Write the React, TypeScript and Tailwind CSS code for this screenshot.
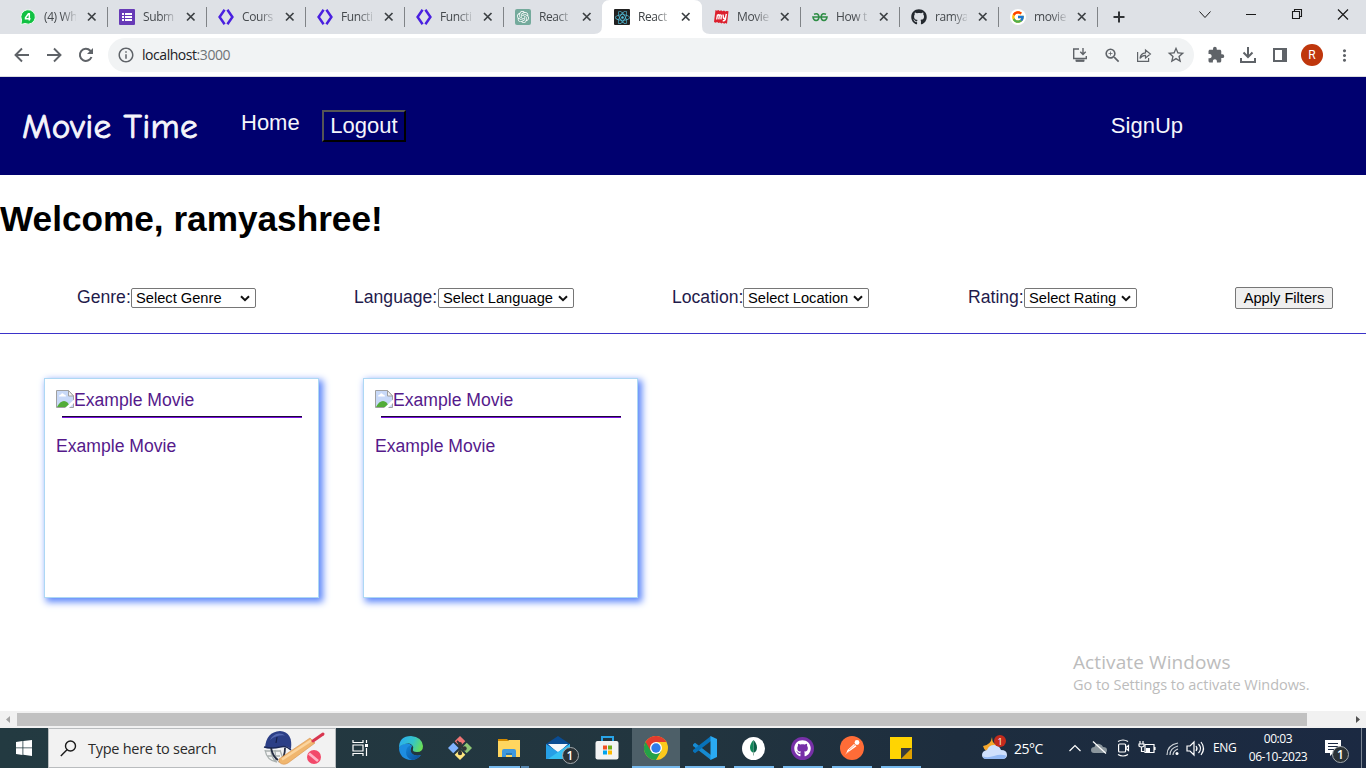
import React, { type ReactNode } from 'react';
import { MdInfoOutline, MdZoomIn, MdStarBorder, MdExtension, MdMoreVert } from 'react-icons/md';
import { FaReact, FaGithub } from 'react-icons/fa';
import { FcGoogle } from 'react-icons/fc';
import { SiOpenai } from 'react-icons/si';

/* ---------- Favicons ---------- */

const WhatsApp = () => (
  <svg width="16" height="16" viewBox="0 0 16 16">
    <path d="M1 15.5 1.6 11A7.2 7.2 0 1 1 5 14.4Z" fill="#12c143" stroke="#f4fff6" strokeWidth=".9" />
    <path d="M9.3 11.500V4.800H8.400L5.500 8.800v1h5" fill="none" stroke="#fff" strokeWidth="1.500" />
  </svg>
);

const Forms = () => (
  <svg width="16" height="16" viewBox="0 0 16 16">
    <rect width="16" height="16" rx="1" fill="#673ab7" />
    <path d="M3 4h2v2H3zm3 0h7v2H6zM3 7h2v2H3zm3 0h7v2H6zM3 10h2v2H3zm3 0h7v2H6z" fill="#fff" />
  </svg>
);

const Brackets = () => (
  <svg width="16" height="16" viewBox="0 0 16 16" fill="none" stroke="#4a20e0" strokeWidth="2.5">
    <path d="M6.6.8 1.6 8l5 7.2M9.4.8l5 7.2-5 7.2" />
  </svg>
);

const OpenAI = () => (
  <span className="flex h-4 w-4 items-center justify-center rounded-[2px] bg-[#74aa9c] text-white">
    <SiOpenai size={12} />
  </span>
);

const ReactIcon = () => (
  <span className="flex h-4 w-4 items-center justify-center rounded-[1px] bg-[#222] text-[#53c1de]">
    <FaReact size={15} />
  </span>
);

const BookMyShow = () => (
  <svg className="shrink-0" width="17" height="16" viewBox="0 0 17 16">
    <path d="m2.5 1 1.4.8L5.3.9l1.4 1 1.4-.7 1.4 1 1.5-.7 1.3 1 1.4-.6 1.8.4L14 14.7l-1.5-.7-1.4.8-1.4-1-1.4.6-1.3-1-1.5.7-1.4-1-1.5.6-1.6-.6Z" fill="#dc1f2d" />
    <path d="M3.7 10.5 4.5 5.5M4.3 6.5q1.8-1.5 2 0l-.5 3.8M6.3 6.5q1.9-1.3 2 .2l-.4 3.6M10 5.5l.5 3.7q1 .8 2-.3L13.3 5l-1 5.6q-.7 1.7-2.6 1" fill="none" stroke="#fff" strokeWidth="1.4" />
  </svg>
);

const Google = () => (
  <span className="flex h-4 w-4 shrink-0 items-center justify-center rounded-full bg-white"><FcGoogle size={14} /></span>
);

const Geeks = () => (
  <svg width="16" height="16" viewBox="0 0 16 16" fill="none" stroke="#2f8d46" strokeWidth="1.600">
    <path d="M2 5.300Q6.300 3.500 7 8q-.4 3.700-3 3.500-2.600-.1-3-3.500h14q-.4 3.400-3 3.500-2.600.2-3-3.500.7-4.500 5-2.700" />
  </svg>
);

/* ---------- Browser ---------- */

const tabs: { title: string; icon: ReactNode }[] = [
  { title: '(4) Wh', icon: <WhatsApp /> },
  { title: 'Subm', icon: <Forms /> },
  { title: 'Cours', icon: <Brackets /> },
  { title: 'Functi', icon: <Brackets /> },
  { title: 'Functi', icon: <Brackets /> },
  { title: 'React', icon: <OpenAI /> },
  { title: 'React', icon: <ReactIcon /> },
  { title: 'Movie', icon: <BookMyShow /> },
  { title: 'How t', icon: <Geeks /> },
  { title: 'ramya', icon: <FaGithub size={16} color="#24292f" /> },
  { title: 'movie', icon: <Google /> },
];
const ACTIVE = 6;

function Tab({ title, icon, index }: { title: string; icon: ReactNode; index: number }) {
  const active = index === ACTIVE;
  const separated = !active && index !== ACTIVE - 1;
  return (
    <div className={`relative flex h-[34px] w-[99px] shrink-0 items-center pl-[11px] ${active ? 'text-[#3c4043]' : 'text-[#45494d]'}`}>
      {active && (
        <svg className="absolute -left-[9px] top-0" width="116" height="34" viewBox="0 0 116 34">
          <path d="M0 34q8 0 8-8V8q0-8 8-8h84q8 0 8 8v18q0 8 8 8Z" fill="#fff" />
        </svg>
      )}
      <span className="relative flex w-4 shrink-0 justify-center">{icon}</span>
      <span className="relative ml-[8px] w-[32px] shrink-0 whitespace-nowrap text-[12px] leading-4 tracking-[-0.4px] [mask-image:linear-gradient(to_right,#000_55%,rgba(0,0,0,0.15))]">{title}</span>
      <svg className="relative ml-[10px] shrink-0" width="12" height="12" viewBox="0 0 12 12" stroke="#3c4043" strokeWidth="1.700"><path d="m2 2 7.500 7.500M9.500 2 2 9.500" /></svg>
      {separated && <span className="ml-auto h-5 w-px bg-[#808387]" />}
    </div>
  );
}

function WindowStrip() {
  return (
    <div className="flex h-[34px] items-center bg-[#dee1e6] pl-[9px]">
      {tabs.map((t, i) => <Tab key={i} index={i} {...t} />)}
      <svg className="ml-[15px]" width="12" height="12" viewBox="0 0 12 12" stroke="#303336" strokeWidth="2"><path d="M6 .5v11M.5 6h11" /></svg>
      <svg className="ml-auto" width="176" height="34" viewBox="1190 0 176 34" fill="none" stroke="#1a1a1a">
        <path d="m1199.500 11.500 5.500 6 5.500-6" />
        <path d="M1246 14.5h10M1292.5 11.5h7v7h-7zM1294.5 11.500v-2h7v7h-2" strokeWidth="1.1" />
        <path d="m1338 9.500 10 10m0-10-10 10" strokeWidth="1.200" />
      </svg>
    </div>
  );
}

const InstallIcon = () => (
  <svg width="16" height="16" viewBox="0 0 16 16" fill="none" stroke="#5f6368" strokeWidth="1.4">
    <path d="M7 2H1.700v9.500h12.600V9M4 14h8M11 1v6M8.300 4.800 11 7.500l2.700-2.700" /><path d="M3.500 12.500h9v2h-9z" fill="#5f6368" stroke="none" />
  </svg>
);
const ShareIcon = () => (
  <svg width="16" height="16" viewBox="0 0 16 16" fill="none" stroke="#5f6368" strokeWidth="1.200">
    <path d="M1.600 5v9.400h11V11M4 11.500Q4.500 6 9.500 5.800V3L14.400 7 9.500 11V8.300Q6 8.300 4 11.500Z" />
  </svg>
);

function Toolbar() {
  return (
    <div className="flex h-[43px] items-center border-b border-[#dadce0] bg-white text-[#5f6368]">
      <svg className="ml-[14px]" width="16" height="16" viewBox="0 0 16 16" fill="none" stroke="#5f6368" strokeWidth="1.900"><path d="M15 8H2M8 1.500 1.500 8 8 14.500" /></svg>
      <svg className="ml-[16px]" width="16" height="16" viewBox="0 0 16 16" fill="none" stroke="#5f6368" strokeWidth="1.900"><path d="M1 8h13M8 1.500 14.500 8 8 14.500" /></svg>
      <svg className="ml-[16px]" width="16" height="16" viewBox="0 0 16 16" fill="none" stroke="#5f6368" strokeWidth="2"><path d="M13.500 10A6 6 0 1 1 12.300 3.800L13.500 5" /><path d="M15 1v6H9Z" fill="#5f6368" stroke="none" /></svg>
      <div className="ml-[14px] flex h-[34px] w-[1086px] items-center rounded-full bg-[#f1f3f4]">
        <MdInfoOutline className="ml-[9px]" size={18} />
        <span className="ml-[7px] text-[14px] leading-[18px] tracking-[-0.45px] text-[#202124]">localhost<span className="text-[#6f7377]">:3000</span></span>
        <div className="ml-auto flex items-center pr-[8px]">
          <InstallIcon />
          <MdZoomIn className="ml-[15px]" size={19} />
          <span className="ml-[14px]"><ShareIcon /></span>
          <MdStarBorder className="ml-[14px]" size={20} />
        </div>
      </div>
      <MdExtension className="ml-[13px]" size={18} />
      <svg className="ml-[14px]" width="18" height="18" viewBox="0 0 18 18" fill="none" stroke="#5f6368" strokeWidth="2">
        <path d="M9 1v9M4.500 6.500 9 11l4.500-4.500M2 12v4h14v-4" />
      </svg>
      <svg className="ml-[16px]" width="14" height="14" viewBox="0 0 14 14">
        <path d="M1 1h12v12H1z" fill="none" stroke="#5f6368" strokeWidth="2" /><path d="M9 0h5v14H9z" fill="#5f6368" />
      </svg>
      <span className="ml-[14px] flex h-[22px] w-[22px] items-center justify-center rounded-full bg-[#bf360c] font-[Roboto] text-[12px] text-white">R</span>
      <MdMoreVert className="ml-[12px]" size={19} />
    </div>
  );
}

/* ---------- Page ---------- */

function Header() {
  return (
    <header className="flex h-[98px] items-start bg-[#00006f] text-[22px] leading-[25px] text-[#f5f5fb]">
      <span className="ml-[22px] mt-[27px] w-[219px] whitespace-nowrap font-['Comic_Sans_MS','Comic_Neue',Lato,sans-serif] text-[35.200px] leading-[46px] tracking-[0.3px] [-webkit-text-stroke:0.9px_#f5f5fb]">Movie Time</span>
      <span className="mt-[33px] w-[81px]">Home</span>
      <button className="mt-[33px] flex h-[32px] w-[84px] items-center justify-center border-2 border-b-black border-l-[#555] border-r-black border-t-[#555] pb-[2px]">Logout</button>
      <span className="ml-auto mr-[183px] mt-[36px]">SignUp</span>
    </header>
  );
}

const filters = [
  { label: 'Genre', box: 'w-[125px]', cell: 'w-[277px]', field: 'w-[54px]' },
  { label: 'Language', box: 'w-[136px]', cell: 'w-[318px]', field: 'w-[84px]' },
  { label: 'Location', box: 'w-[126px]', cell: 'w-[296px]', field: 'w-[71px]' },
  { label: 'Rating', box: 'w-[113px]', cell: 'w-[267px]', field: 'w-[56px]' },
];

function Filters() {
  return (
    <div className="flex h-[75px] items-start border-b border-[#3b33c9] pl-[77px] pt-[28px]">
      {filters.map((f) => (
        <div key={f.label} className={`flex shrink-0 items-start ${f.cell}`}>
          <label className={`shrink-0 whitespace-nowrap text-[17.600px] leading-[20px] text-[#1f1b4b] ${f.field}`}>{f.label}:</label>
          <button className={`mt-[1px] flex h-[20px] items-center rounded-[2px] border border-[#767676] bg-white pl-[4px] text-[14.667px] leading-[18px] text-black ${f.box}`}>
            <span className="whitespace-nowrap">Select {f.label}</span>
            <svg className="ml-auto mr-[5px] shrink-0" width="10" height="7" viewBox="0 0 10 7" fill="none" stroke="#111" strokeWidth="2"><path d="m1 1.200 4 4 4-4" /></svg>
          </button>
        </div>
      ))}
      <button className="flex h-[22px] w-[98px] items-center justify-center whitespace-nowrap rounded-[2px] border border-[#767676] bg-[#efefef] text-[14.667px] text-black">Apply Filters</button>
    </div>
  );
}

const BrokenImage = () => (
  <svg width="18" height="18" viewBox="0 0 18 18">
    <path d="M.5.500h12L17.500 6v11.500H.5Z" fill="#c8d9f8" stroke="#a0a0a0" />
    <path d="M3 6.500q0-2 2-2 1-2.500 3 0 2 0 2 2Z" fill="#fff" />
    <path d="M1 17q3-6 7-6 4 0 6 6Z" fill="#52ac38" />
    <path d="M12.500.5V6h5Z" fill="#f4f4f4" stroke="#a0a0a0" />
    <path d="m18.500 9-10 9.500h4l6-6Z" fill="#fff" />
  </svg>
);

function MovieCard() {
  return (
    <article className="h-[220px] w-[275px] border border-[#add8f4] bg-white px-[11px] pt-[11px] text-[17.600px] leading-[20px] text-[#551a8b] shadow-[3px_3px_7px_1px_#5c86fa]">
      <div className="flex h-[20px]"><BrokenImage /><span>Example Movie</span></div>
      <div className="ml-[6px] mt-[6px] h-[2px] w-[240px] border-b border-t border-b-[#7a0fe0] border-t-[#1c0838]" />
      <p className="mt-[18px]">Example Movie</p>
    </article>
  );
}

function Page() {
  return (
    <main className="relative flex h-[634px] flex-col overflow-hidden bg-white font-['Liberation_Sans',Arial,sans-serif]">
      <Header />
      <h1 className="h-[84px] whitespace-nowrap pt-[24px] text-[35.200px] font-bold leading-[40px] text-black">Welcome, ramyashree!</h1>
      <Filters />
      <section className="flex gap-[44px] pl-[44px] pt-[44px]">
        <MovieCard />
        <MovieCard />
      </section>
      <aside className="absolute left-[1073px] top-[573px] whitespace-nowrap font-['Segoe_UI','Open_Sans',sans-serif] text-[#bcbcbc]">
        <p className="text-[19px] leading-[24px] tracking-[0.1px]">Activate Windows</p>
        <p className="text-[14.500px] leading-[22px] tracking-[-0.03px]">Go to Settings to activate Windows.</p>
      </aside>
    </main>
  );
}

function Scrollbar() {
  return (
    <div className="flex h-[17px] items-center bg-[#f1f1f1]">
      <svg width="17" height="17" viewBox="0 0 17 17"><path d="M10 5v7L6 8.500Z" fill="#a3a3a3" /></svg>
      <div className="h-[13px] w-[1290px] bg-[#c1c1c1]" />
      <svg className="ml-auto" width="17" height="17" viewBox="0 0 17 17"><path d="M7 5v7l4-3.500Z" fill="#505050" /></svg>
    </div>
  );
}

/* ---------- Taskbar ---------- */

const Cricket = () => (
  <svg width="62" height="36" viewBox="0 0 62 36">
    <g fill="none" stroke="#a9b0af" strokeWidth="1.300"><path d="M2 20q2 11 12 12M2 21h15M4 26h13M8 20q0 7 5 12M12 20l1 12M17 20l3 9-5 3" /></g>
    <path d="M2 18Q3 2 17 1q13 1 11 18-4-4-11-2-8 2-15 1Z" fill="#2b3e86" />
    <path d="M7 10Q10 4 16 3.500q4 0 6 2-8-1-15 4.500Z" fill="#5468b0" />
    <path d="m14 7-1 6" stroke="#16214d" strokeWidth="1.200" />
    <path d="M1 17q8 2 16 0 6-2 11 3" fill="none" stroke="#1b2858" strokeWidth="1.500" />
    <path d="M8 18q2 9 7 12M22 18q0 9-5 14" fill="none" stroke="#252c42" strokeWidth="1.800" />
    <path d="m16 29 31-21 5 5-27 20q-5 3-9-1Z" fill="#f0b66e" stroke="#d8924c" strokeWidth=".6" />
    <path d="m19 29.500 29-19" stroke="#fbd49d" strokeWidth="2.500" />
    <path d="m50 11 10-7" stroke="#d8364f" strokeWidth="3" strokeLinecap="round" />
    <circle cx="51" cy="27" r="7" fill="#f2496a" /><path d="m46 23.500 9 7.500" stroke="#ffb3c6" strokeWidth="2.800" />
  </svg>
);

const TaskView = () => (
  <svg width="17" height="16" viewBox="0 0 17 16" fill="none" stroke="#fff" strokeWidth="1.200">
    <path d="M1 0v2.500h10V0M1 16v-2.500h10V16M1 5h10v6H1zM14.500 0v3M14.500 8v8" /><path d="M13 4h3v3h-3z" fill="#fff" stroke="none" />
  </svg>
);
const Edge = () => (
  <svg width="24" height="24" viewBox="0 0 24 24">
    <defs>
      <linearGradient id="edgeTop" x1="0" y1=".3" x2="1" y2=".6"><stop stopColor="#2aaef0" /><stop offset=".55" stopColor="#35c4c8" /><stop offset="1" stopColor="#6be053" /></linearGradient>
      <linearGradient id="edgeLow" x1="0" y1="0" x2="1" y2="1"><stop stopColor="#1285d8" /><stop offset="1" stopColor="#0d4c95" /></linearGradient>
    </defs>
    <path d="M0 12C0 19 5 24 12 24q6 0 10-5-5 2-9-1-3-3 0-8-3-4-8-2-4 1-5 4Z" fill="#1d8de0" />
    <path d="M7 16q0-6 6-7-3 3-1 7 3 5 10 3-4 5-9 5-6-2-6-8Z" fill="url(#edgeLow)" />
    <path d="M0 12Q0 0 12 0q11 1 12 10 0 6-6 6-5 0-4-3 1-2-1-4-3-3-7-1-5 1-6 4Z" fill="url(#edgeTop)" />
  </svg>
);
const Git = () => (
  <svg width="24" height="24" viewBox="0 0 24 24">
    <g transform="rotate(45 12 12)">
      <path d="M3.500 3.500H11V11H3.500z" fill="#f07575" /><path d="M13 3.500h7.500V11H13z" fill="#8fc775" /><path d="M3.500 13H11v7.500H3.500z" fill="#80b3ff" /><path d="M13 13h7.500v7.500H13z" fill="#ffe680" />
    </g>
    <path d="M9 5l3 3v9M12 9l4 4" fill="none" stroke="#303436" strokeWidth="1.800" />
    <g fill="#303436"><circle cx="12" cy="8" r="2" /><circle cx="16.500" cy="12.500" r="2.200" /><circle cx="12" cy="17" r="2.200" /></g>
  </svg>
);
const Explorer = () => (
  <svg width="22" height="20" viewBox="0 0 22 20">
    <path d="M0 1h9l2 2H0z" fill="#d58b00" /><path d="M0 3h10l1-1h11v17H0Z" fill="#ffd65f" /><path d="M4 19v-6q0-2 2-2h10q2 0 2 2v6h-4v-4H8v4Z" fill="#3e98dd" /><path d="M8 15h6v2H8z" fill="#2678b8" />
  </svg>
);
const Mail = () => (
  <span className="relative flex">
    <svg width="24" height="24" viewBox="0 0 24 24">
      <path d="M0 8 12 0l12 8v4H0Z" fill="#0a4c93" /><path d="M2 8h20l-10 9Z" fill="#f4f7fb" /><path d="M0 8 12 16l12-8v15H0Z" fill="#269fe6" /><path d="m24 8-22 15h22Z" fill="#35c0f2" />
    </svg>
    <CountBadge className="-bottom-[4px] left-[16px]" />
  </span>
);
function CountBadge({ className }: { className: string }) {
  return <span className={`absolute flex h-[17px] w-[17px] items-center justify-center rounded-full border border-[#a3a9ad] bg-[#2b3236] text-[12px] font-semibold leading-none text-white ${className}`}>1</span>;
}
const Store = () => (
  <svg width="24" height="24" viewBox="0 0 24 24">
    <path d="M7 6V1h11v5" fill="none" stroke="#29a5e8" strokeWidth="2" /><rect x=".5" y="5" width="23" height="18.500" rx="2" fill="#f3f3f3" />
    <path d="M8 9.500h4v4H8z" fill="#f25022" /><path d="M13 9.500h4v4h-4z" fill="#6fae1c" /><path d="M8 14.500h4v4H8z" fill="#00a4ef" /><path d="M13 14.500h4v4h-4z" fill="#ffb900" />
  </svg>
);
const Chrome = () => (
  <svg width="24" height="24" viewBox="0 0 24 24">
    <circle cx="12" cy="12" r="12" fill="#fcc91c" />
    <path d="M12 12 1.600 6A12 12 0 0 0 12 24l5.200-9Z" fill="#24a148" />
    <path d="M1.600 6a12 12 0 0 1 20.800 0H12v6l-5.200 3Z" fill="#e33b2e" />
    <circle cx="12" cy="12" r="6" fill="#fff" /><circle cx="12" cy="12" r="4.700" fill="#2f7cec" />
  </svg>
);
const VSCode = () => (
  <svg width="24" height="24" viewBox="0 0 24 24">
    <path d="M0 8.500 2 6.800 18 19v5L0 10Z" fill="#168bd2" /><path d="m0 15.500 2 1.700L18 5V0L0 14Z" fill="#0872b9" /><path d="m17.500 0 6.500 3v18l-6.500 3Z" fill="#2aaaf2" />
  </svg>
);
const Mongo = () => (
  <span className="flex h-[23px] w-[23px] items-center justify-center rounded-full bg-white">
    <svg width="9" height="16" viewBox="0 0 9 16"><path d="M4.500 0Q1 3.500 1 7.500T4.500 13Z" fill="#11885a" /><path d="M4.500 0Q8 3.500 8 7.500T4.500 13Z" fill="#0b5f46" /><path d="M4.500 12v3.500" stroke="#8fae9f" /></svg>
  </span>
);
const GitHubDesktop = () => (
  <span className="flex h-[23px] w-[23px] items-center justify-center rounded-full bg-[#7730a8] text-white"><FaGithub size={17} /></span>
);
const Postman = () => (
  <svg width="24" height="24" viewBox="0 0 24 24">
    <circle cx="12" cy="12" r="12" fill="#ff6c37" /><circle cx="17" cy="6.500" r="2.400" fill="#fff" />
    <path d="m6 18 1.500-4L14 8l2.500 2.200-7 5Z" fill="#fff" /><path d="m5 18.500 4-3M9 14l6-5" stroke="#ff9b78" strokeWidth=".8" />
  </svg>
);
const Sticky = () => (
  <svg width="22" height="22" viewBox="0 0 22 22"><path d="M0 0h22v22H0z" fill="#ffd402" /><path d="M22 11v11H11Z" fill="#dfa000" /><path d="M11 11h11L11 22Z" fill="#3a3b3c" /></svg>
);

const apps: { icon: ReactNode; state?: 'open' | 'group' | 'active' }[] = [
  { icon: <Edge /> }, { icon: <Git /> }, { icon: <Explorer />, state: 'group' }, { icon: <Mail /> }, { icon: <Store /> },
  { icon: <Chrome />, state: 'active' }, { icon: <VSCode />, state: 'open' }, { icon: <Mongo />, state: 'open' },
  { icon: <GitHubDesktop />, state: 'open' }, { icon: <Postman />, state: 'open' }, { icon: <Sticky />, state: 'open' },
];

function AppCell({ icon, state }: { icon: ReactNode; state?: string }) {
  return (
    <div className="flex h-[40px] w-[49px] shrink-0 justify-center">
      <div className={`flex h-[40px] flex-col items-center ${state === 'active' ? 'w-[48px] bg-[#4d5f68]' : 'w-[40px]'}`}>
        <div className="flex h-[38px] items-center pt-[2px]">{icon}</div>
        {state && (
          <div className="flex h-[2px] w-full bg-[#76b9ed]">
            {state === 'group' && <span className="ml-auto w-[9px] border-l border-[#233540] bg-[#5687b0]" />}
          </div>
        )}
      </div>
    </div>
  );
}

const Weather = () => (
  <span className="relative flex">
    <svg width="25" height="24" viewBox="0 0 25 24">
      <path d="M10 1Q9 9 1 10q2 7 9 6 7-1 7-7-7 0-7-8Z" fill="#f6a72b" />
      <path d="M5 23q-5 0-5-4 0-4 5-5 2-5 7-5t7 5q6 0 6 5 0 4-5 4Z" fill="#cfe0fc" /><path d="M4 23q-3-.5-3-2.500 5 1.500 11-.5 6-2 12-.5 0 3.500-4 3.500Z" fill="#93b9f4" />
    </svg>
    <span className="absolute -top-px left-[12px] flex h-[12px] w-[12px] items-center justify-center rounded-full bg-[#c42b1c] text-[9px] leading-none text-white">1</span>
  </span>
);

const TrayIcons = () => (
  <svg width="140" height="20" viewBox="1068 738 140 20" fill="none" stroke="#fff" strokeWidth="1.200">
    <path d="m1069.500 751 5.500-5.500 5.500 5.500" />
    <path d="M1094 753q-3 0-3-3t3.500-3q1-4 5-3 3 1 3.500 3 4 0 4 3t-3 3Z" fill="#8b969d" stroke="none" /><path d="m1093 741.500 13 12" />
    <path d="M1118 741.500q5-3 10 0M1118 754.500q5 3 10 0" /><rect x="1118.600" y="744" width="7" height="8" rx="1" /><path d="m1126 747.500 2.500-2v5l-2.500-2" />
    <path d="M1145 744.500h9v8h-9zM1155 747v3" /><path d="M1146 748h4v4h-4z" fill="#fff" stroke="none" /><path d="M1140 741v3M1143 741v3M1139 744h5v2q-2.500 2-5 0ZM1141.500 747v4.500h3" />
    <path d="M1167 755q0-10 11-12M1170 755q0-7 8-9M1173 755q0-4 5-6" stroke="#d1d6db" /><circle cx="1177" cy="753.500" r="1.500" fill="#fff" stroke="none" />
    <path d="M1187 746h3l4-4v13l-4-4h-3ZM1196 746q2 2.500 0 5M1198.500 744q4 4.500 0 9M1201 742q5 6.500 0 13" />
  </svg>
);

function Taskbar() {
  return (
    <footer className="flex h-[40px] items-center overflow-hidden bg-[linear-gradient(90deg,#233a41_0%,#22353f_50%,#1d2d3e_70%,#1b2942_100%)] text-white">
      <div className="flex w-[48px] shrink-0 justify-center">
        <svg width="16" height="16" viewBox="0 0 16 16" fill="#fff"><path d="m0 2 6.500-1v6.500H0zm7.300-1.100L16 0v7.500H7.300zM0 8.300h6.500V15L0 14zm7.300 0H16V16l-8.700-1.200z" /></svg>
      </div>
      <div className="flex h-[40px] w-[288px] shrink-0 items-center border border-[#b9bcbe] bg-[#f2f2f2]">
        <svg className="ml-[11px]" width="17" height="17" viewBox="0 0 17 17" fill="none" stroke="#1a1a1a" strokeWidth="1.400"><circle cx="10.500" cy="6" r="5" /><path d="M7 9.700.8 16" /></svg>
        <span className="ml-[11px] mt-[2px] whitespace-nowrap text-[14.500px] tracking-[-0.27px] text-[#2b2b2b]">Type here to search</span>
        <span className="ml-auto mr-[10px]"><Cricket /></span>
      </div>
      <div className="flex w-[50px] shrink-0 justify-center pr-[2px]"><TaskView /></div>
      {apps.map((a, i) => <AppCell key={i} {...a} />)}
      <div className="ml-auto flex h-[40px] w-[384px] shrink-0 items-center">
        <Weather />
        <span className="ml-[7px] w-[54px] text-[14px] tracking-[-0.5px]">25°C</span>
        <TrayIcons />
        <span className="ml-[5px] w-[30px] text-[12px] tracking-[-0.3px]">ENG</span>
        <div className="flex w-[70px] flex-col items-center whitespace-nowrap text-[12px] leading-[18px] tracking-[-0.4px]"><span>00:03</span><span>06-10-2023</span></div>
        <span className="relative ml-[12px] flex">
          <svg width="16" height="16" viewBox="0 0 16 16"><path d="M0 0h16v13H8l-3 3v-3H0Z" fill="#fff" /><path d="M3 3.500h10M3 6.500h10M3 9.500h6" stroke="#1b2942" /></svg>
          <CountBadge className="-bottom-[7px] left-[7px]" />
        </span>
        <span className="ml-auto mr-[4px] h-[40px] w-px bg-[#7a8492]" />
      </div>
    </footer>
  );
}

export default function App() {
  return (
    <div className="flex h-[768px] w-[1366px] flex-col overflow-hidden bg-white font-['Segoe_UI','Open_Sans',sans-serif]">
      <WindowStrip />
      <Toolbar />
      <Page />
      <Scrollbar />
      <Taskbar />
    </div>
  );
}
